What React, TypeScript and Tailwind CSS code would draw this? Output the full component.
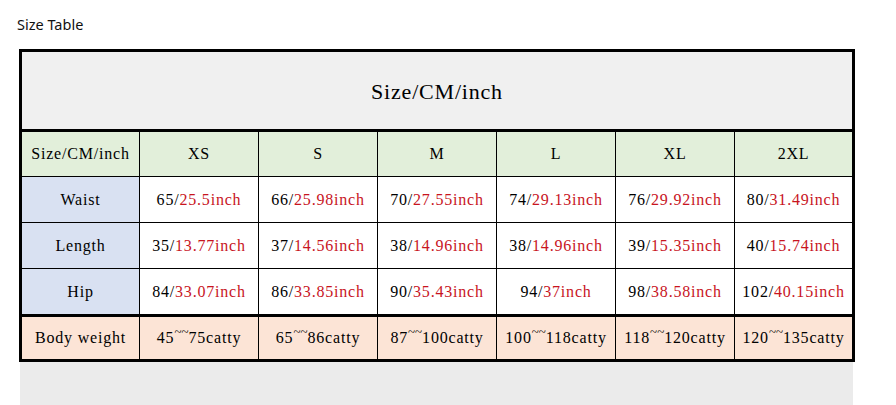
import React from "react";

const sizes = ["XS", "S", "M", "L", "XL", "2XL"];

const rows: { label: string; values: [string, string][] }[] = [
  {
    label: "Waist",
    values: [
      ["65/", "25.5inch"],
      ["66/", "25.98inch"],
      ["70/", "27.55inch"],
      ["74/", "29.13inch"],
      ["76/", "29.92inch"],
      ["80/", "31.49inch"],
    ],
  },
  {
    label: "Length",
    values: [
      ["35/", "13.77inch"],
      ["37/", "14.56inch"],
      ["38/", "14.96inch"],
      ["38/", "14.96inch"],
      ["39/", "15.35inch"],
      ["40/", "15.74inch"],
    ],
  },
  {
    label: "Hip",
    values: [
      ["84/", "33.07inch"],
      ["86/", "33.85inch"],
      ["90/", "35.43inch"],
      ["94/", "37inch"],
      ["98/", "38.58inch"],
      ["102/", "40.15inch"],
    ],
  },
];

const weights: [string, string][] = [
  ["45", "75catty"],
  ["65", "86catty"],
  ["87", "100catty"],
  ["100", "118catty"],
  ["118", "120catty"],
  ["120", "135catty"],
];

const mono = "font-['Liberation_Serif',serif] text-[16px] tracking-[0.8px] text-black";
const grid = "grid grid-cols-[117px_repeat(5,118px)_117px] gap-px bg-black";

function Tilde() {
  return <span className="relative -top-[6px] text-[13px] tracking-[0px]">~~</span>;
}

export default function App() {
  return (
    <div className="w-[896px] h-[405px] bg-white overflow-hidden">
      <div className="pt-[14px] pl-[17px] h-[49px] font-['Noto_Sans',sans-serif] text-[14.5px] leading-[20px] text-[#111]">
        Size Table
      </div>
      <div className="ml-[19px] w-[836px] border-[3px] border-black">
        <div className="h-[80px] bg-[#f0f0f0] flex items-center justify-center border-b-[3px] border-black">
          <span className="font-['Liberation_Serif',serif] text-[22px] tracking-[0.8px] text-black pt-[2px]">
            Size/CM/inch
          </span>
        </div>
        <div className={grid}>
          <div className={`h-[44px] bg-[#e2efda] flex items-center justify-center ${mono}`}>Size/CM/inch</div>
          {sizes.map((s) => (
            <div key={s} className={`h-[44px] bg-[#e2efda] flex items-center justify-center ${mono}`}>
              {s}
            </div>
          ))}
          {rows.map((r) => (
            <React.Fragment key={r.label}>
              <div className={`h-[45px] bg-[#d9e1f2] flex items-center justify-center ${mono}`}>{r.label}</div>
              {r.values.map(([a, b], i) => (
                <div key={i} className={`h-[45px] bg-white flex items-center justify-center ${mono}`}>
                  <span>{a}</span>
                  <span className="text-[#c8141e]">{b}</span>
                </div>
              ))}
            </React.Fragment>
          ))}
        </div>
        <div className={`${grid} border-t-[3px] border-black`}>
          <div className={`h-[42px] bg-[#fce4d6] flex items-center justify-center ${mono}`}>Body weight</div>
          {weights.map(([a, b], i) => (
            <div key={i} className={`h-[42px] bg-[#fce4d6] flex items-center justify-center ${mono}`}>
              <span>{a}</span>
              <Tilde />
              <span>{b}</span>
            </div>
          ))}
        </div>
      </div>
      <div className="ml-[20px] w-[833px] h-[50px] bg-[#ebebeb]" />
    </div>
  );
}
